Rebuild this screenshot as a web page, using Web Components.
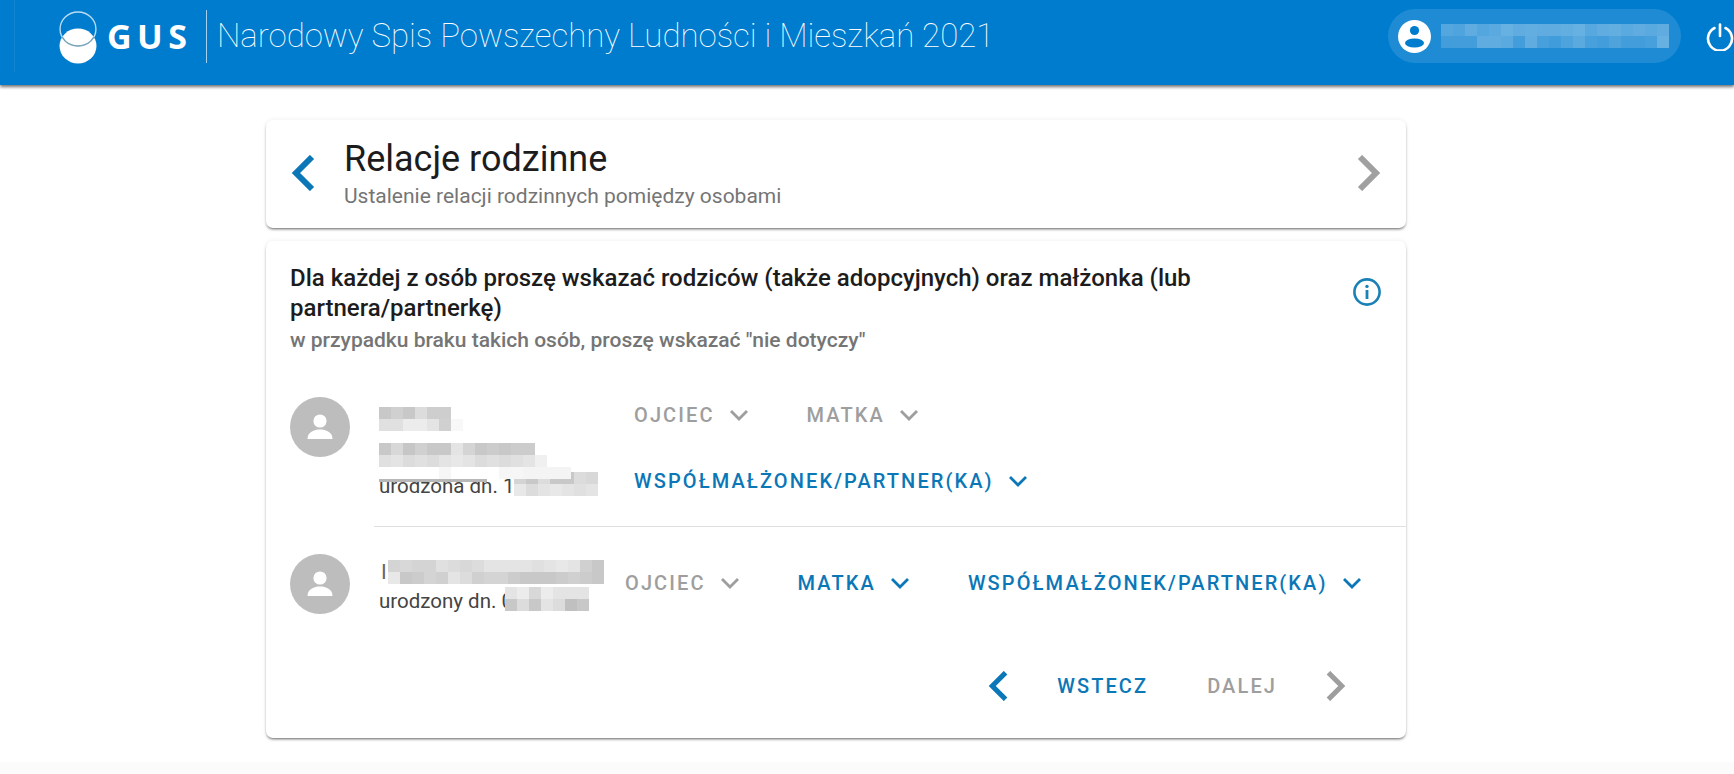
<!DOCTYPE html>
<html lang="pl">
<head>
<meta charset="utf-8">
<title>Narodowy Spis Powszechny</title>
<style>
html, body { margin: 0; height: 774px; overflow: hidden; background: #fff; font-family: Roboto, sans-serif; }
body { display: flex; flex-direction: column; }
.over { position: relative; z-index: 1; }
</style>
</head>
<body>
<app-header></app-header>
<app-main>
    <step-card slot="step"
        title-text="Relacje rodzinne"
        subtitle="Ustalenie relacji rodzinnych pomiędzy osobami"></step-card>
    <question-card slot="question">
        <span slot="heading">Dla każdej z osób proszę wskazać rodziców (także adopcyjnych) oraz małżonka (lub partnera/partnerkę)</span>
        <span slot="hint">w przypadku braku takich osób, proszę wskazać "nie dotyczy"</span>
        <person-row class="first" slot="rows">
            <div slot="info">
                <blur-mosaic cells="c8,d0,c8,dc,ce,ce,ff;e0,e0,ec,ec,e4,d0,f8"></blur-mosaic>
                <blur-mosaic class="over" style="margin-top:12px" cells="c8,d8,c6,d0,c8,c8,e4,d4,c8,cc,c8,cc,cc;e0,e4,dc,e0,dc,e4,e8,e4,dc,e0,dc,e0,e4,f0;ff,ff,ff,ff,ff,f6,ff,ff,ff,ff,f6,f6,f4,f4,f4,f4"></blur-mosaic>
                <div class="over" style="width:108px;height:3px;background:#b8b8b8"></div>
                <person-date style="margin-top:-10px" cover="514" cover-cells="d4,c8,dc,c8,c8,dc,d8;e8,dc,e4,e8,e4,e0,e4">urodzona dn. 1</person-date>
            </div>
            <relation-button slot="actions">OJCIEC</relation-button>
            <relation-button slot="actions">MATKA</relation-button>
            <relation-button slot="actions" active>WSPÓŁMAŁŻONEK/PARTNER(KA)</relation-button>
        </person-row>
        <person-row class="second" slot="rows">
            <div slot="info">
                <div style="display:flex;align-items:center;font-size:21px;color:#666"><span style="width:7px;margin-left:2px;overflow:hidden">I</span><blur-mosaic cells="d4,d8,d4,d4,e0,dc,d8,dc,e4,e4,e4,e4,e0,e4,e8,e4,d0,c8;e8,c8,cc,d4,d0,e4,dc,d0,d4,d4,cc,c8,c8,c8,cc,d0,cc,c8"></blur-mosaic></div>
                <person-date style="margin-top:3px" cover="505" cover-cells="e4,ec,d8,ec,e4,e4,e4;c8,dc,c8,e4,dc,c0,c8">urodzony dn. 0</person-date>
            </div>
            <relation-button slot="actions">OJCIEC</relation-button>
            <relation-button slot="actions" active>MATKA</relation-button>
            <relation-button slot="actions" active>WSPÓŁMAŁŻONEK/PARTNER(KA)</relation-button>
        </person-row>
        <wizard-nav slot="nav"></wizard-nav>
    </question-card>
</app-main>

<script>
const LEFT_CHEVRON = '<path d="M21 2 L5 18 L21 34" fill="none" stroke="currentColor" stroke-width="6"/>';
const RIGHT_CHEVRON = '<path d="M4 2 L20 18 L4 34" fill="none" stroke="currentColor" stroke-width="6"/>';

class AppHeader extends HTMLElement {
    constructor() {
        super();
        this.attachShadow({mode: 'open'}).innerHTML = `
        <style>
        :host { display: flex; flex: none; align-items: flex-start; height: 85px; background: #007cce; color: #fff;
            box-shadow: 0 2px 3px rgba(0,0,0,.55); position: relative; z-index: 2; }
        .edge { position: absolute; left: 14px; top: 0; height: 72px; width: 1px; background: rgba(255,255,255,.07); }
        .logo { display: block; margin: 9px 0 0 59px; }
        .gus { font: 700 34px "Open Sans", sans-serif; letter-spacing: 5.5px; margin: 14px 0 0 10px; line-height: 44px; width: 99px; flex: none; }
        .sep { flex: none; width: 1px; height: 53px; background: rgba(255,255,255,.65); margin-top: 10px; }
        h1 { margin: 14px 0 0 10px; font: 100 33px/44px Roboto, sans-serif; white-space: nowrap; }
        .user { display: flex; align-items: center; gap: 10px; box-sizing: border-box; height: 54px; width: 293px; margin: 9px 0 0 auto;
            padding-left: 10px; border-radius: 27px; background: rgba(255,255,255,.12); }
        .power { display: block; flex: none; margin: 23px 0 0 25px; }
        </style>
        <span class="edge"></span>
        <svg class="logo" width="38" height="55" viewBox="0 0 36 55" preserveAspectRatio="none">
            <circle cx="18" cy="37" r="17.5" fill="#fff"/>
            <path d="M1 20 A17 17 0 0 1 35 20 A17 17 0 0 1 1 20" fill="none" stroke="#b9dcf2" stroke-width="1.3"/>
            <path d="M3 28 A17 17 0 0 0 33 28" fill="none" stroke="#7da3b8" stroke-width="1.4"/>
        </svg>
        <div class="gus">GUS</div>
        <div class="sep"></div>
        <h1>Narodowy Spis Powszechny Ludności i Mieszkań 2021</h1>
        <div class="user">
            <svg width="33" height="33" viewBox="0 0 33 33">
                <circle cx="16.5" cy="16.5" r="16.5" fill="#fff"/>
                <circle cx="16.5" cy="10.5" r="4.6" fill="#007cce"/>
                <ellipse cx="16.5" cy="23" rx="9.5" ry="4.6" fill="#007cce"/>
            </svg>
            <blur-mosaic light cells="b8,c0,a0,b8,a8,90,a0,98,a0,a0,98,90,b0,a0,98,a8,a0,a8,a0;e0,e0,e0,a0,a0,a8,e0,a0,d8,e8,c8,a8,d8,e0,c8,e0,e0,d8,90"></blur-mosaic>
        </div>
        <svg class="power" width="28" height="28" viewBox="0 0 28 28">
            <path d="M8.5 5 A12 12 0 1 0 19.5 5" fill="none" stroke="#fff" stroke-width="2.6" stroke-linecap="round"/>
            <path d="M14 1.5 V13" stroke="#fff" stroke-width="2.6" stroke-linecap="round"/>
        </svg>`;
    }
}

class AppMain extends HTMLElement {
    constructor() {
        super();
        this.attachShadow({mode: 'open'}).innerHTML = `
        <style>
        :host { display: block; flex: 1; padding: 35px 0 0 266px;
            background: linear-gradient(#fff 677px, #fbfbfb 677px); }
        .col { width: 1140px; display: flex; flex-direction: column; gap: 13px; }
        </style>
        <div class="col"><slot name="step"></slot><slot name="question"></slot></div>`;
    }
}

class StepCard extends HTMLElement {
    constructor() {
        super();
        this.attachShadow({mode: 'open'}).innerHTML = `
        <style>
        :host { display: flex; align-items: center; box-sizing: border-box; height: 108px; padding: 0 25px; background: #fff;
            border-radius: 7px; box-shadow: 0 2px 3px -1px rgba(0,0,0,.6), 0 0 5px rgba(0,0,0,.07); }
        svg { flex: none; display: block; margin-top: -2px; }
        .back { color: #0b77b7; }
        .next { color: #a0a0a0; margin-left: auto; }
        .txt { margin-left: 28px; margin-top: -2px; }
        h2 { margin: 0; font: 400 36px/44px Roboto, sans-serif; color: #1c1c1c; }
        p { margin: 2px 0 0; font: 400 21px/26px Roboto, sans-serif; color: #757575; }
        </style>
        <svg class="back" width="25" height="36" viewBox="0 0 25 36">${LEFT_CHEVRON}</svg>
        <div class="txt"><h2></h2><p></p></div>
        <svg class="next" width="25" height="36" viewBox="0 0 25 36">${RIGHT_CHEVRON}</svg>`;
    }
    connectedCallback() {
        this.shadowRoot.querySelector('h2').textContent = this.getAttribute('title-text');
        this.shadowRoot.querySelector('p').textContent = this.getAttribute('subtitle');
    }
}

class QuestionCard extends HTMLElement {
    constructor() {
        super();
        this.attachShadow({mode: 'open'}).innerHTML = `
        <style>
        :host { display: block; box-sizing: border-box; height: 497px; padding: 22px 0 0 24px; background: #fff;
            border-radius: 7px; box-shadow: 0 2px 3px -1px rgba(0,0,0,.6), 0 0 5px rgba(0,0,0,.07); }
        .top { display: flex; justify-content: space-between; padding-right: 24px; }
        .heading { width: 920px; font: 500 24px/30px Roboto, sans-serif; color: #1c1c1c; }
        .hint { margin-top: 3px; font: 500 21px/28px Roboto, sans-serif; color: #757575; }
        svg { flex: none; margin: 15px 1px 0 0; }
        </style>
        <div class="top">
            <div>
                <div class="heading"><slot name="heading"></slot></div>
                <div class="hint"><slot name="hint"></slot></div>
            </div>
            <svg width="28" height="28" viewBox="0 0 28 28">
                <circle cx="14" cy="14" r="12.6" fill="none" stroke="#1a80b6" stroke-width="2.6"/>
                <circle cx="14" cy="8.4" r="1.7" fill="#1a80b6"/>
                <rect x="12.6" y="12" width="2.8" height="9" fill="#1a80b6"/>
            </svg>
        </div>
        <slot name="rows"></slot>
        <slot name="nav"></slot>`;
    }
}

class PersonRow extends HTMLElement {
    constructor() {
        super();
        this.attachShadow({mode: 'open'}).innerHTML = `
        <style>
        :host { display: flex; align-items: flex-start; }
        :host(.first) { margin-top: 43px; }
        :host(.second) { margin-top: 27px; }
        .avatar { flex: none; width: 60px; height: 60px; display: block; }
        .body { flex: 1; display: flex; align-items: flex-start; box-sizing: border-box; margin-left: 24px; padding-left: 5px; }
        :host(.first) .body { height: 130px; border-bottom: 1px solid #e0e0e0; }
        .info { flex: none; }
        :host(.first) .info { width: 255px; padding-top: 10px; }
        :host(.second) .info { width: 246px; padding-top: 6px; }
        .actions { display: flex; flex-wrap: wrap; column-gap: 58px; row-gap: 22px; }
        :host(.first) .actions { width: 500px; margin-top: -4px; }
        :host(.second) .actions { flex-wrap: nowrap; margin-top: 7px; }
        </style>
        <svg class="avatar" viewBox="0 0 60 60">
            <circle cx="30" cy="30" r="30" fill="#bdbdbd"/>
            <circle cx="30" cy="24" r="6.6" fill="#fff"/>
            <path d="M17.5 42 C17.5 35 24 32.5 30 32.5 C36 32.5 42.5 35 42.5 42 Z" fill="#fff"/>
        </svg>
        <div class="body">
            <div class="info"><slot name="info"></slot></div>
            <div class="actions"><slot name="actions"></slot></div>
        </div>`;
    }
}

class PersonDate extends HTMLElement {
    constructor() {
        super();
        this.attachShadow({mode: 'open'}).innerHTML = `
        <style>
        :host { display: block; position: relative; font: 400 20.5px/28px Roboto, sans-serif; color: #444; white-space: nowrap; }
        blur-mosaic { position: absolute; top: 0; }
        </style>
        <slot></slot><blur-mosaic></blur-mosaic>`;
    }
    connectedCallback() {
        const m = this.shadowRoot.querySelector('blur-mosaic');
        m.style.left = (parseInt(this.getAttribute('cover')) - 379) + 'px';
        m.setAttribute('cells', this.getAttribute('cover-cells'));
    }
}

class RelationButton extends HTMLElement {
    constructor() {
        super();
        this.attachShadow({mode: 'open'}).innerHTML = `
        <style>
        :host { display: inline-flex; align-items: center; height: 44px;
            font: 500 20px/44px Roboto, sans-serif; letter-spacing: 2.1px; color: #9e9e9e; white-space: nowrap; }
        :host([active]) { color: #0b77b7; }
        svg { display: block; margin-left: 14px; }
        </style>
        <slot></slot>
        <svg width="20" height="12" viewBox="0 0 20 12"><path d="M2 2 L10 10 L18 2" fill="none" stroke="currentColor" stroke-width="2.8"/></svg>`;
    }
}

class WizardNav extends HTMLElement {
    constructor() {
        super();
        this.attachShadow({mode: 'open'}).innerHTML = `
        <style>
        :host { display: flex; align-items: center; justify-content: flex-end; padding: 56px 60px 0 0;
            font: 500 20px/30px Roboto, sans-serif; letter-spacing: 2.1px; }
        .blue { color: #0b77b7; }
        .grey { color: #9e9e9e; }
        svg { display: block; }
        .back { margin-right: 48px; }
        .next { margin-left: 48px; }
        .gap { width: 59px; }
        </style>
        <svg class="back blue" width="21" height="30" viewBox="0 0 25 36">${LEFT_CHEVRON}</svg>
        <span class="blue">WSTECZ</span>
        <span class="gap"></span>
        <span class="grey">DALEJ</span>
        <svg class="next grey" width="21" height="30" viewBox="0 0 25 36">${RIGHT_CHEVRON}</svg>`;
    }
}

// censored text blocks, one cell per grey value, rows split by ";"
class BlurMosaic extends HTMLElement {
    constructor() {
        super();
        this.attachShadow({mode: 'open'}).innerHTML = `
        <style>
        :host { display: block; flex: none; }
        .row { display: flex; }
        i { display: block; width: 12px; height: 12px; }
        </style>`;
    }
    static get observedAttributes() { return ['cells']; }
    attributeChangedCallback() {
        const root = this.shadowRoot;
        root.querySelectorAll('.row').forEach(r => r.remove());
        const light = this.hasAttribute('light');
        (this.getAttribute('cells') || '').split(';').forEach(line => {
            const row = document.createElement('div');
            row.className = 'row';
            line.split(',').forEach(hex => {
                const c = document.createElement('i');
                const v = parseInt(hex, 16);
                c.style.background = light
                    ? `rgba(255,255,255,${((255 - v) / 255 * .5 + .1).toFixed(2)})`
                    : `rgb(${v},${v},${v})`;
                row.appendChild(c);
            });
            root.appendChild(row);
        });
    }
}

customElements.define('blur-mosaic', BlurMosaic);
customElements.define('app-header', AppHeader);
customElements.define('app-main', AppMain);
customElements.define('step-card', StepCard);
customElements.define('question-card', QuestionCard);
customElements.define('person-row', PersonRow);
customElements.define('person-date', PersonDate);
customElements.define('relation-button', RelationButton);
customElements.define('wizard-nav', WizardNav);
</script>
</body>
</html>
